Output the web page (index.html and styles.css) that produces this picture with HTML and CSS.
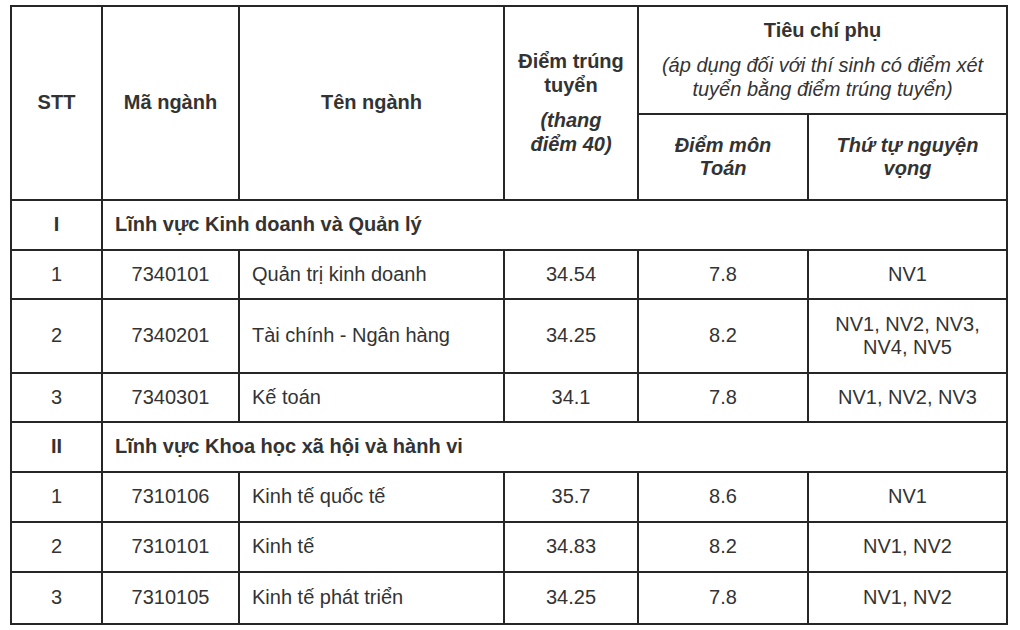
FILE: index.html
```html
<!DOCTYPE html>
<html lang="vi">
<head>
<meta charset="utf-8">
<title>Điểm trúng tuyển</title>
<link rel="stylesheet" href="styles.css">
</head>
<body>
<div class="page">
  <table class="score-table">
    <colgroup>
      <col class="c-stt">
      <col class="c-code">
      <col class="c-name">
      <col class="c-score">
      <col class="c-math">
      <col class="c-nv">
    </colgroup>
    <thead>
      <tr class="h-top">
        <th rowspan="2">STT</th>
        <th rowspan="2">Mã ngành</th>
        <th rowspan="2">Tên ngành</th>
        <th rowspan="2" class="score-head">
          <p>Điểm trúng<br>tuyển</p>
          <p class="it">(thang<br>điểm 40)</p>
        </th>
        <th colspan="2" class="sub-head">
          <p>Tiêu chí phụ</p>
          <p class="note">(áp dụng đối với thí sinh có điểm xét<br>tuyển bằng điểm trúng tuyển)</p>
        </th>
      </tr>
      <tr class="h-bottom">
        <th class="it">Điểm môn<br>Toán</th>
        <th class="it">Thứ tự nguyện<br>vọng</th>
      </tr>
    </thead>
    <tbody>
      <tr class="section">
        <td class="center">I</td>
        <td colspan="5" class="sec-title">Lĩnh vực Kinh doanh và Quản lý</td>
      </tr>
      <tr class="row">
        <td class="center">1</td>
        <td class="center">7340101</td>
        <td class="name">Quản trị kinh doanh</td>
        <td class="center">34.54</td>
        <td class="center">7.8</td>
        <td class="center">NV1</td>
      </tr>
      <tr class="row tall">
        <td class="center">2</td>
        <td class="center">7340201</td>
        <td class="name">Tài chính - Ngân hàng</td>
        <td class="center">34.25</td>
        <td class="center">8.2</td>
        <td class="center">NV1, NV2, NV3,<br>NV4, NV5</td>
      </tr>
      <tr class="row">
        <td class="center">3</td>
        <td class="center">7340301</td>
        <td class="name">Kế toán</td>
        <td class="center">34.1</td>
        <td class="center">7.8</td>
        <td class="center">NV1, NV2, NV3</td>
      </tr>
      <tr class="section">
        <td class="center">II</td>
        <td colspan="5" class="sec-title">Lĩnh vực Khoa học xã hội và hành vi</td>
      </tr>
      <tr class="row r50">
        <td class="center">1</td>
        <td class="center">7310106</td>
        <td class="name">Kinh tế quốc tế</td>
        <td class="center">35.7</td>
        <td class="center">8.6</td>
        <td class="center">NV1</td>
      </tr>
      <tr class="row r50">
        <td class="center">2</td>
        <td class="center">7310101</td>
        <td class="name">Kinh tế</td>
        <td class="center">34.83</td>
        <td class="center">8.2</td>
        <td class="center">NV1, NV2</td>
      </tr>
      <tr class="row r52">
        <td class="center">3</td>
        <td class="center">7310105</td>
        <td class="name">Kinh tế phát triển</td>
        <td class="center">34.25</td>
        <td class="center">7.8</td>
        <td class="center">NV1, NV2</td>
      </tr>
    </tbody>
  </table>
</div>
</body>
</html>
```

FILE: styles.css
```css
html, body {
  margin: 0;
  padding: 0;
  background: #ffffff;
}

body {
  font-family: "Liberation Sans", Arial, Helvetica, sans-serif;
  color: #333333;
}

.page {
  padding: 5px 0 0 10px;
}

.score-table {
  border-collapse: collapse;
  table-layout: fixed;
  width: 996px;
  font-size: 20px;
  line-height: 23.5px;
}

.c-stt { width: 91px; }
.c-code { width: 137px; }
.c-name { width: 265px; }
.c-score { width: 134px; }
.c-math { width: 170px; }
.c-nv { width: 199px; }

.score-table th,
.score-table td {
  border: 2px solid #262626;
  padding: 0 4px;
  vertical-align: middle;
}

.score-table th {
  font-weight: bold;
  text-align: center;
}

.score-table p {
  margin: 0;
}

.h-top { height: 108px; }
.h-bottom { height: 86px; }

.score-head p + p {
  margin-top: 12px;
}

.sub-head p + p {
  margin-top: 12px;
}

.it {
  font-style: italic;
}

.note {
  font-weight: normal;
  font-style: italic;
}

.section { height: 50px; }
.row { height: 49px; }
.row.tall { height: 74px; }
.row.r50 { height: 50px; }
.row.r52 { height: 52px; }

.center {
  text-align: center;
}

.name {
  padding-left: 12px !important;
  text-align: left;
}

.sec-title {
  font-weight: bold;
  padding-left: 12px !important;
}

.section .center {
  font-weight: bold;
}
```
